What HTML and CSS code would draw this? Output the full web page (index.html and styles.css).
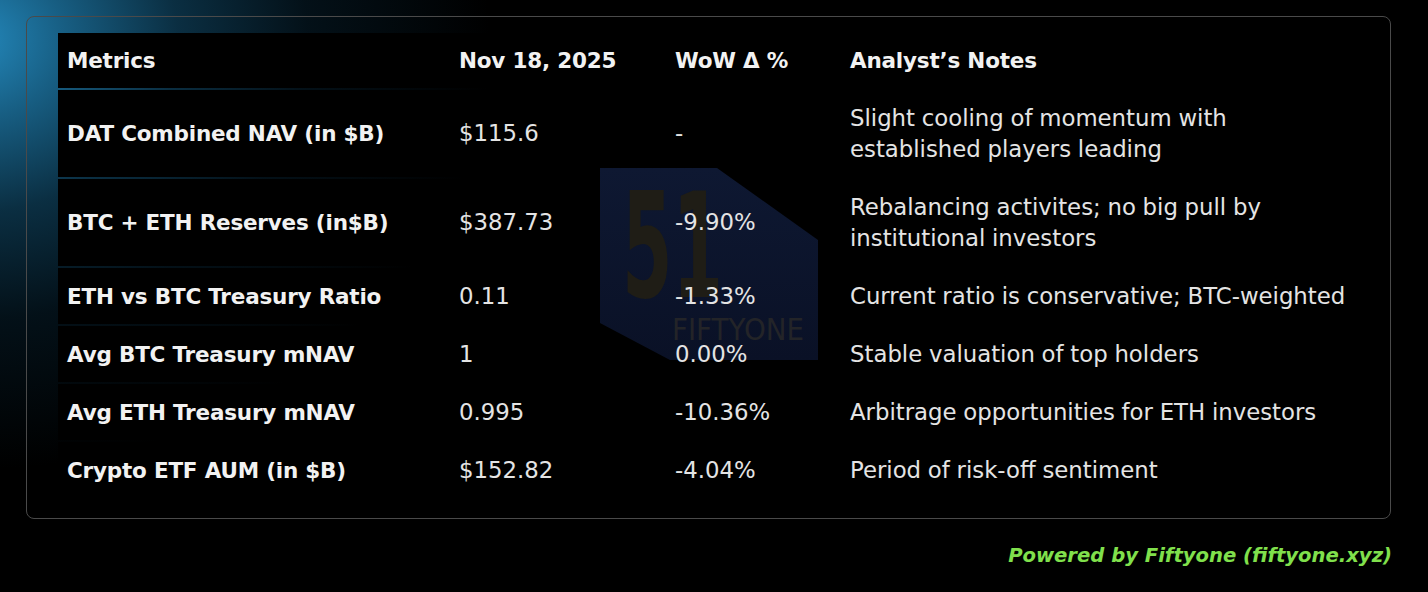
FILE: index.html
```html
<!DOCTYPE html>
<html lang="en">
<head>
<meta charset="utf-8">
<title>DAT Metrics</title>
<link rel="stylesheet" href="styles.css">
</head>
<body>
<main class="page">
  <section class="card">
    <div class="watermark" aria-hidden="true">
      <svg width="218" height="192" viewBox="0 0 218 192">
        <defs>
          <linearGradient id="wmfill" x1="0" y1="0" x2="0" y2="1">
            <stop offset="0" stop-color="#0e1832"/>
            <stop offset="1" stop-color="#0a1126"/>
          </linearGradient>
        </defs>
        <polygon points="0,0 117,0 218,72 218,192 70,192 0,155" fill="url(#wmfill)"/>
        <text x="22" y="129" class="wm-num" textLength="101" lengthAdjust="spacingAndGlyphs">51</text>
        <text x="72" y="172" class="wm-word" textLength="132" lengthAdjust="spacingAndGlyphs">FIFTYONE</text>
      </svg>
    </div>
    <div class="table">
      <div class="row head">
        <div class="cell"><span>Metrics</span></div>
        <div class="cell"><span>Nov 18, 2025</span></div>
        <div class="cell"><span>WoW Δ %</span></div>
        <div class="cell"><span>Analyst’s Notes</span></div>
      </div>
      <div class="row">
        <div class="cell metric"><span>DAT Combined NAV (in $B)</span></div>
        <div class="cell"><span>$115.6</span></div>
        <div class="cell"><span>-</span></div>
        <div class="cell"><span>Slight cooling of momentum with<br>established players leading</span></div>
      </div>
      <div class="row">
        <div class="cell metric"><span>BTC + ETH Reserves (in$B)</span></div>
        <div class="cell"><span>$387.73</span></div>
        <div class="cell"><span>-9.90%</span></div>
        <div class="cell"><span>Rebalancing activites; no big pull by<br>institutional investors</span></div>
      </div>
      <div class="row">
        <div class="cell metric"><span>ETH vs BTC Treasury Ratio</span></div>
        <div class="cell"><span>0.11</span></div>
        <div class="cell"><span>-1.33%</span></div>
        <div class="cell"><span>Current ratio is conservative; BTC-weighted</span></div>
      </div>
      <div class="row">
        <div class="cell metric"><span>Avg BTC Treasury mNAV</span></div>
        <div class="cell"><span>1</span></div>
        <div class="cell"><span>0.00%</span></div>
        <div class="cell"><span>Stable valuation of top holders</span></div>
      </div>
      <div class="row">
        <div class="cell metric"><span>Avg ETH Treasury mNAV</span></div>
        <div class="cell"><span>0.995</span></div>
        <div class="cell"><span>-10.36%</span></div>
        <div class="cell"><span>Arbitrage opportunities for ETH investors</span></div>
      </div>
      <div class="row">
        <div class="cell metric"><span>Crypto ETF AUM (in $B)</span></div>
        <div class="cell"><span>$152.82</span></div>
        <div class="cell"><span>-4.04%</span></div>
        <div class="cell"><span>Period of risk-off sentiment</span></div>
      </div>
    </div>
  </section>
  <p class="credit">Powered by Fiftyone (fiftyone.xyz)</p>
</main>
</body>
</html>
```

FILE: styles.css
```css
html {
  background: #000;
}

body {
  margin: 0;
  min-height: 592px;
  background-color: #000;
  background-image: radial-gradient(ellipse 520px 430px at -30px 40px,
    rgba(36, 138, 190, 1) 0%,
    rgba(26, 105, 146, 0.9) 18%,
    rgba(14, 62, 88, 0.75) 40%,
    rgba(6, 30, 44, 0.55) 65%,
    rgba(0, 0, 0, 0) 100%);
  background-repeat: no-repeat;
  font-family: "DejaVu Sans", "Liberation Sans", sans-serif;
  color: #e8e8e8;
}

.page {
  padding: 16px 0 0 26px;
  width: 1366px;
}

.card {
  position: relative;
  box-sizing: border-box;
  width: 1365px;
  padding: 16px 31px 20px 31px;
  border: 1px solid #4a4a4a;
  border-radius: 8px;
}

.watermark {
  position: absolute;
  left: 573px;
  top: 151px;
  width: 218px;
  height: 192px;
  z-index: 1;
  pointer-events: none;
}

.watermark svg {
  display: block;
}

.wm-num {
  font-family: "DejaVu Sans Condensed", "DejaVu Sans", sans-serif;
  font-weight: 700;
  font-size: 147px;
  fill: #1f1d16;
}

.wm-word {
  font-family: "DejaVu Sans", sans-serif;
  font-weight: 400;
  font-size: 30px;
  fill: #232428;
}

.table {
  display: grid;
  row-gap: 2px;
}

.row {
  display: grid;
  grid-template-columns: 392px 216px 175px 1fr;
}

.cell {
  background: #000;
  padding: 12.5px 9px;
  display: flex;
  align-items: center;
  font-size: 22.8px;
  line-height: 31px;
  word-spacing: -0.5px;
  font-weight: 400;
  color: #e4e4e4;
  white-space: nowrap;
}

.cell span {
  position: relative;
  z-index: 2;
}

.head .cell {
  padding-top: 12px;
  padding-bottom: 12px;
  font-weight: 700;
  font-size: 21.5px;
  letter-spacing: -0.2px;
  word-spacing: 0;
  color: #f2f2f2;
}

.cell.metric {
  font-weight: 700;
  font-size: 21.5px;
  letter-spacing: -0.2px;
  word-spacing: 0;
  color: #f2f2f2;
}

.credit {
  margin: 25px 0 0 0;
  text-align: right;
  font-size: 19.6px;
  line-height: 24px;
  font-weight: 700;
  font-style: italic;
  color: #80e04c;
}
```
